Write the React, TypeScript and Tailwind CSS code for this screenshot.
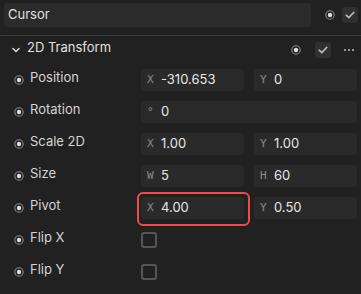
import React from 'react';

const Radio: React.FC = () => (
    <svg width="10" height="10" viewBox="0 0 10 10" className="shrink-0">
        <circle cx="5" cy="5" r="4.2" fill="none" stroke="#8a8a8a" strokeWidth="1.1" />
        <circle cx="5" cy="5" r="2.2" fill="#e0e0e0" />
    </svg>
);

const Check: React.FC = () => (
    <svg width="10" height="8" viewBox="0 0 10 8">
        <path d="M1.2 4.2 L3.8 6.6 L8.8 1.4" fill="none" stroke="#b5b5b5" strokeWidth="1.6" strokeLinecap="round" strokeLinejoin="round" />
    </svg>
);

const Field: React.FC<{ prefix: string; value: string; wide?: boolean; highlight?: boolean }> = ({ prefix, value, wide, highlight }) => (
    <div className={`relative flex items-center h-[22px] rounded-[3px] bg-[#2a2a2a] ${wide ? 'w-[216px]' : 'w-[103px]'}`}>
        <span className="w-[20px] pl-[6px] text-[11px] text-[#8c8c8c] font-['DejaVu_Sans_Mono',monospace]">{prefix}</span>
        <span className="text-[13px] text-[#e6e6e6]">{value}</span>
        {highlight && (
            <div className="absolute -left-[4px] -right-[6px] -top-[5px] -bottom-[7px] rounded-[6px] border-2 border-[#ee4b4b]" />
        )}
    </div>
);

const Row: React.FC<{ label: string; children: React.ReactNode }> = ({ label, children }) => (
    <div className="flex items-center h-[32px]">
        <div className="flex items-center w-[141px] pl-[14px] gap-[6px]">
            <Radio />
            <span className="text-[13px] text-[#d4d4d4] -mt-[4px]">{label}</span>
        </div>
        <div className="flex items-center gap-[10px]">{children}</div>
    </div>
);

const Checkbox: React.FC = () => (
    <div className="w-[16px] h-[16px] rounded-[3px] border-2 border-[#555555]" />
);

const App: React.FC = () => {
    return (
        <div className="w-[361px] h-[294px] bg-[#212121] font-['Inter',sans-serif] overflow-hidden">
            <div className="flex items-start h-[35px] pt-[3px] pl-[4px]">
                <div className="flex items-center w-[307px] h-[24px] rounded-[3px] bg-[#2b2b2b] pl-[4px] text-[13px] text-[#e0e0e0]">
                    Cursor
                </div>
                <div className="flex items-center h-[24px] ml-[14px]">
                    <Radio />
                </div>
                <div className="flex items-center justify-center w-[16px] h-[16px] mt-[4px] ml-[7px] rounded-[3px] bg-[#303030]">
                    <Check />
                </div>
            </div>
            <div className="h-px bg-[#3b3b3b]" />
            <div className="flex items-center h-[28px] pb-[1px]">
                <svg width="8" height="6" viewBox="0 0 8 6" className="ml-[12px]">
                    <path d="M1 1.5 L4 4.5 L7 1.5" fill="none" stroke="#d8d8d8" strokeWidth="1.5" strokeLinecap="round" strokeLinejoin="round" />
                </svg>
                <span className="ml-[7px] text-[13px] text-[#e0e0e0] -mt-[3px]">2D Transform</span>
                <div className="ml-auto flex items-center">
                    <Radio />
                    <div className="flex items-center justify-center w-[16px] h-[16px] ml-[14px] rounded-[3px] bg-[#303030]">
                        <Check />
                    </div>
                    <div className="flex items-center gap-[2px] ml-[13px] mr-[7px]">
                        <span className="w-[2px] h-[2px] rounded-full bg-[#c0c0c0]" />
                        <span className="w-[2px] h-[2px] rounded-full bg-[#c0c0c0]" />
                        <span className="w-[2px] h-[2px] rounded-full bg-[#c0c0c0]" />
                    </div>
                </div>
            </div>
            <Row label="Position">
                <Field prefix="X" value="-310.653" />
                <Field prefix="Y" value="0" />
            </Row>
            <Row label="Rotation">
                <Field prefix="°" value="0" wide />
            </Row>
            <Row label="Scale 2D">
                <Field prefix="X" value="1.00" />
                <Field prefix="Y" value="1.00" />
            </Row>
            <Row label="Size">
                <Field prefix="W" value="5" />
                <Field prefix="H" value="60" />
            </Row>
            <Row label="Pivot">
                <Field prefix="X" value="4.00" highlight />
                <Field prefix="Y" value="0.50" />
            </Row>
            <Row label="Flip X">
                <Checkbox />
            </Row>
            <Row label="Flip Y">
                <Checkbox />
            </Row>
        </div>
    );
};

export default App;
